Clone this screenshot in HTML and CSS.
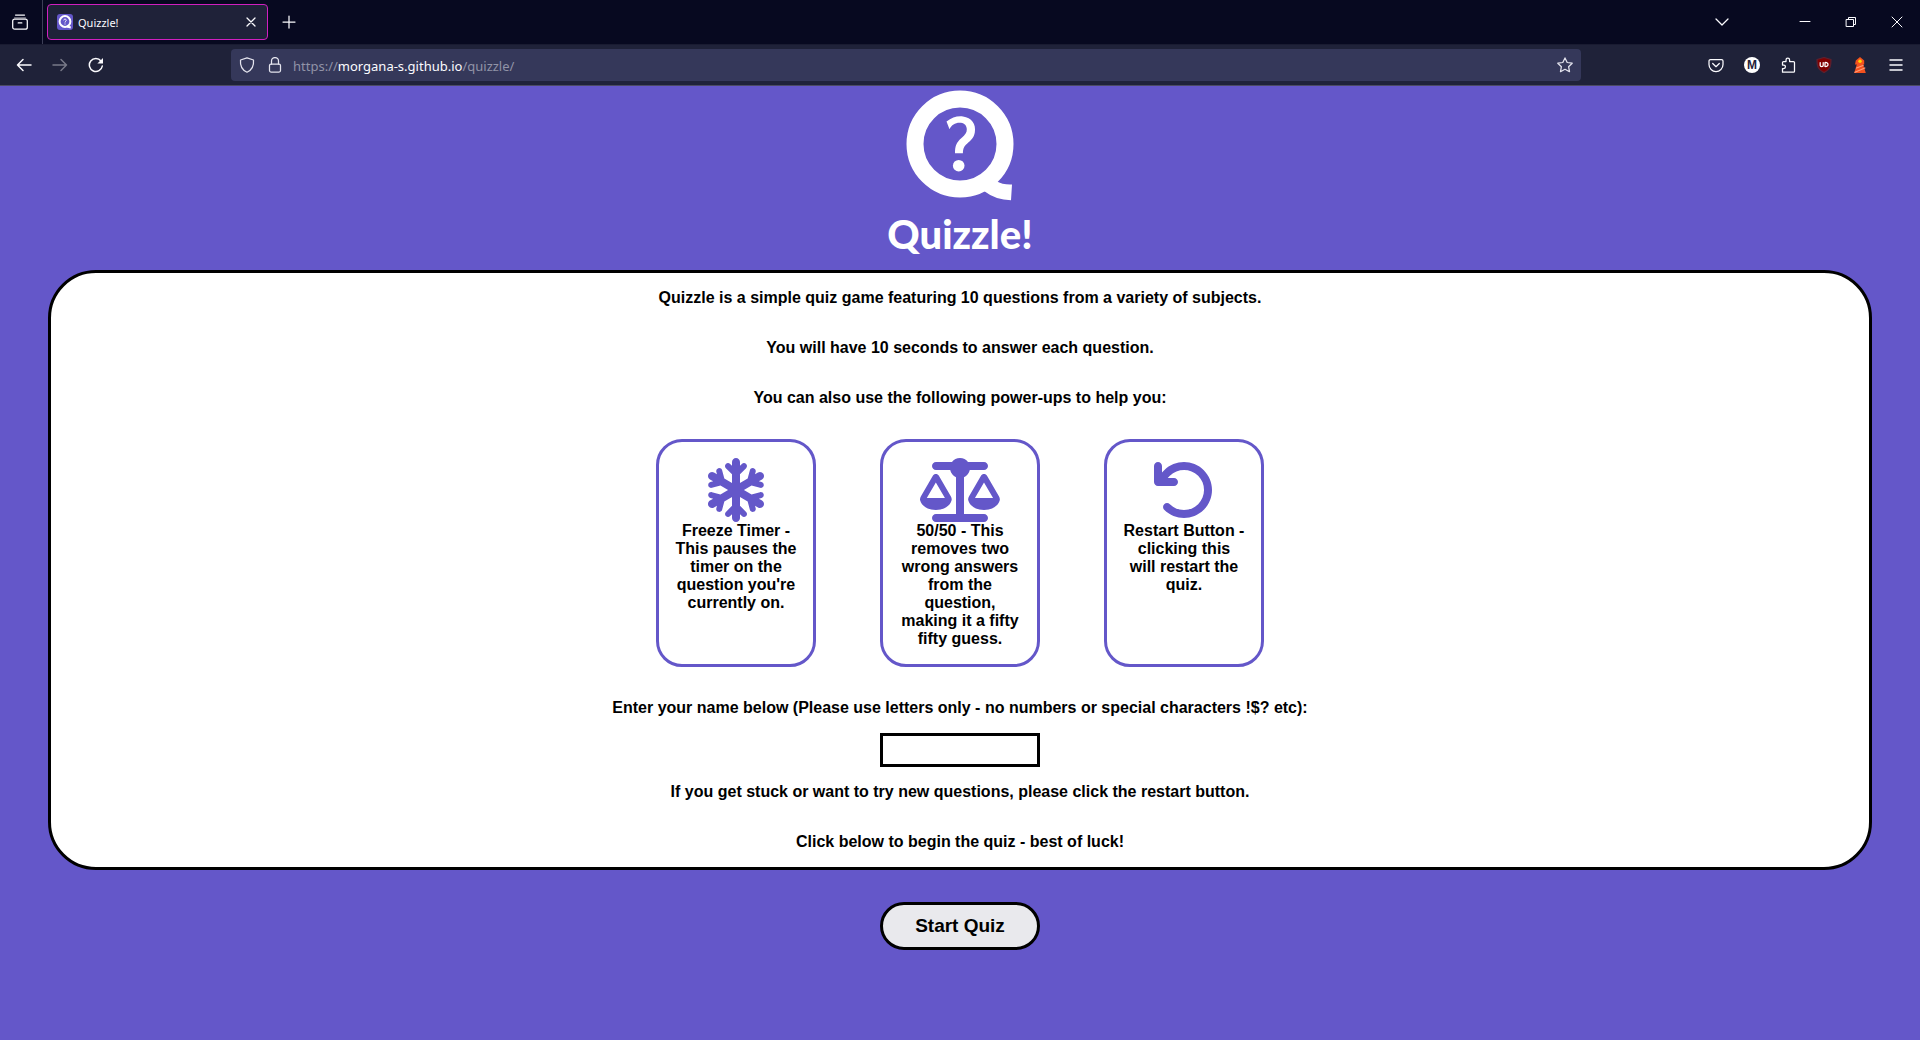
FILE: index.html
```html
<!DOCTYPE html>
<html lang="en">
<head>
<meta charset="utf-8">
<meta name="viewport" content="width=device-width, initial-scale=1">
<title>Quizzle!</title>
<link rel="stylesheet" href="styles.css">
</head>
<body>
<div class="browser">
  <div class="tab-bar">
    <button class="tool view-button" aria-label="Recent browsing"><svg class="icon" viewBox="0 0 16 16"><path d="M3.500 1h9"/><path d="M2.500 3.800h11" opacity=".5"/><rect x=".7" y="5" width="14.600" height="10.200" rx="2"/><path d="M6.200 8.900h3.600"/></svg></button>
    <div class="tab">
      <svg class="favicon" viewBox="0 0 16 16"><rect width="16" height="16" rx="3" fill="#6457c9"/><circle cx="8" cy="7.500" r="5.400" fill="none" stroke="#fff" stroke-width="2"/><path d="M10 12.500l3.800 1" stroke="#fff" stroke-width="2"/><path d="M6.700 6.300c.2-1.700 2.900-1.500 2.500.2-.2.900-1.200.9-1.200 2M8 9.500v1" fill="none" stroke="#fff"/></svg>
      <span class="tab-title">Quizzle!</span>
      <button class="tab-close" aria-label="Close tab"><svg class="icon" viewBox="0 0 16 16"><path d="M4 4l8 8M12 4l-8 8"/></svg></button>
    </div>
    <button class="tool" aria-label="New tab"><svg class="icon" viewBox="0 0 16 16"><path d="M8 2v12M2 8h12"/></svg></button>
    <div class="window-controls">
      <button class="tool list-tabs" aria-label="List all tabs"><svg class="icon" viewBox="0 0 16 16"><path d="M2 5l6 6 6-6"/></svg></button>
      <button class="window-button" aria-label="Minimize"><svg class="icon thin" viewBox="0 0 16 16"><path d="M3 7.500h10"/></svg></button>
      <button class="window-button" aria-label="Restore"><svg class="icon thin" viewBox="0 0 16 16"><path d="M3.500 5.500h7v7h-7zM5.500 5.500v-2h7v7h-2"/></svg></button>
      <button class="window-button" aria-label="Close window"><svg class="icon thin" viewBox="0 0 16 16"><path d="M3 3l10 10M13 3l-10 10"/></svg></button>
    </div>
  </div>
  <div class="nav-bar">
    <button class="tool" aria-label="Back"><svg class="icon bold" viewBox="0 0 16 16"><path d="M15 8H1.500M7 2.500L1.500 8 7 13.500"/></svg></button>
    <button class="tool" aria-label="Forward" disabled><svg class="icon bold" viewBox="0 0 16 16"><path d="M1 8h13.500M9 2.500L14.500 8 9 13.500"/></svg></button>
    <button class="tool" aria-label="Reload"><svg class="icon bold" viewBox="0 0 16 16"><path d="M13 4A6.500 6.500 0 1 0 14.300 9"/><path class="solid" d="M15 1v5.600H9.400z" stroke="none"/></svg></button>
    <div class="url-bar">
      <svg class="icon" viewBox="0 0 16 16"><path d="M8 .8L14.500 3c.5 5.500-1.500 10-6.500 12.200C3 13 1 8.500 1.500 3z"/></svg>
      <svg class="icon" viewBox="0 0 16 16"><rect x="2.500" y="7" width="11" height="8" rx="1.500"/><path d="M4.500 7V4a3.500 3.500 0 0 1 7 0v3"/></svg>
      <span class="url">https://<b>morgana-s.github.io</b>/quizzle/</span>
      <svg class="icon" viewBox="0 0 16 16"><path d="M8 .9l2.200 4.600 5 .7-3.600 3.500.9 5L8 12.300l-4.500 2.400.9-5L.8 6.200l5-.7z"/></svg>
    </div>
    <button class="tool" aria-label="Save to Pocket"><svg class="icon" viewBox="0 0 16 16"><path d="M2.500 2.500h11a1.500 1.500 0 0 1 1.500 1.500v3.500a7 7 0 0 1-14 0V4a1.500 1.500 0 0 1 1.500-1.500z"/><path d="M4.700 6.500L8 9.700l3.300-3.200"/></svg></button>
    <button class="tool" aria-label="Account"><span class="avatar">M</span></button>
    <button class="tool" aria-label="Extensions"><svg class="icon" viewBox="0 0 16 16"><path d="M2.500 15.200v-3.700h1.200a1.700 1.700 0 0 0 0-3.500H2.500V5.500a1 1 0 0 1 1-1H6V3a1.800 1.800 0 0 1 3.600 0v1.500h3.900a1 1 0 0 1 1 1v8.700a1 1 0 0 1-1 1z"/></svg></button>
    <button class="tool" aria-label="uBlock Origin"><svg class="icon" viewBox="0 0 16 16"><path d="M8 .5l7 2C15 9 14.500 12.500 8 15.600 1.500 12.500 1 9 1 2.500z" fill="#800000" stroke="#5b2130"/><path d="M4.200 5.500v3q0 1 1.500 1t1.500-1v-3M9 5.500v4q3 .2 3-2t-3-2" stroke="#fff"/></svg></button>
    <button class="tool" aria-label="Lighthouse"><svg class="icon" viewBox="0 0 16 16"><path d="M3.800 3.500L8 0l4.200 3.500v4H11.200L13.800 16H2.200L4.800 7.500H3z" fill="#f4511e" stroke="none"/><path d="M4.500 11l6.500-2.500M3 15.300l9.800-4.300" stroke="#ff9a78"/><circle cx="8" cy="4.200" r="1.700" fill="#ffd600" stroke="none"/></svg></button>
    <button class="tool" aria-label="Menu"><svg class="icon bold" viewBox="0 0 16 16"><path d="M2 3h12M2 8h12M2 13h12"/></svg></button>
  </div>
</div>

<header class="site-header">
  <svg class="logo" viewBox="0 0 108 112" role="img" aria-label="Quizzle logo"><circle cx="54" cy="54" r="45" fill="none" stroke="#fff" stroke-width="17"/><path d="M90 91q7 4 16 3.500l-1 15.700q-15 0-27-9.200z" fill="#fff"/><path d="M40.500 31.500C46 27.500 51 25.800 57 26.500c8.500 1 13.300 7.500 11.800 16-.8 5-4 8-7.500 11-3.300 2.800-4.300 5-4.400 9.800H49c0-7.500 1.500-11 6.500-15.300 3.800-3.300 5.500-5.500 5.300-9-.3-4.500-3.300-6.300-7.300-6.300-4.500 0-8 2.300-10 6.500z" fill="#fff"/><circle cx="52.700" cy="75.700" r="5.800" fill="#fff"/></svg>
  <h1 class="site-title">Quizzle!</h1>
</header>

<main>
  <section class="panel">
    <p>Quizzle is a simple quiz game featuring 10 questions from a variety of subjects.</p>
    <p>You will have 10 seconds to answer each question.</p>
    <p>You can also use the following power-ups to help you:</p>
    <div class="cards">
      <div class="card">
        <svg class="card-icon" viewBox="0 0 448 512"><path d="M224 0c17.700 0 32 14.300 32 32l0 30.100 15-15c9.400-9.400 24.600-9.400 33.900 0s9.400 24.600 0 33.900l-49 49 0 70.300 61.400-35.800 17.700-66.100c3.400-12.800 16.600-20.400 29.400-17s20.400 16.600 17 29.400l-5.200 19.300 23.600-13.800c15.300-8.900 34.900-3.700 43.800 11.500s3.800 34.900-11.500 43.800l-25.300 14.800 21.700 5.800c12.800 3.400 20.400 16.600 17 29.400s-16.600 20.400-29.400 17l-67.700-18.100L287.500 256l60.900 35.500 67.700-18.100c12.800-3.400 26 4.200 29.400 17s-4.200 26-17 29.400l-21.700 5.800 25.300 14.800c15.300 8.900 20.400 28.500 11.500 43.800s-28.500 20.400-43.800 11.500l-23.600-13.800 5.200 19.300c3.400 12.800-4.200 26-17 29.400s-26-4.200-29.400-17l-17.700-66.100L256 311.700l0 70.300 49 49c9.400 9.400 9.400 24.600 0 33.900s-24.600 9.400-33.900 0l-15-15 0 30.100c0 17.700-14.300 32-32 32s-32-14.300-32-32l0-30.100-15 15c-9.400 9.400-24.600 9.400-33.900 0s-9.400-24.600 0-33.900l49-49 0-70.300-61.400 35.800-17.700 66.100c-3.400 12.800-16.600 20.400-29.400 17s-20.400-16.600-17-29.400l5.200-19.300L48.100 395.600c-15.300 8.900-34.900 3.700-43.800-11.500s-3.700-34.900 11.500-43.800l25.300-14.800-21.700-5.800c-12.800-3.400-20.400-16.600-17-29.400s16.600-20.400 29.400-17l67.700 18.100L160.500 256 99.600 220.500 31.900 238.600c-12.800 3.400-26-4.200-29.400-17s4.200-26 17-29.400l21.700-5.800L15.900 171.600C.6 162.700-4.500 143.100 4.400 127.900s28.500-20.400 43.800-11.500l23.600 13.800-5.200-19.300c-3.400-12.800 4.200-26 17-29.400s26 4.200 29.400 17l17.700 66.100L192 200.300l0-70.300L143 81c-9.400-9.400-9.400-24.600 0-33.900s24.600-9.400 33.900 0l15 15L192 32c0-17.700 14.300-32 32-32z"/></svg>
        <div>Freeze Timer - This pauses the timer on the question you're currently on.</div>
      </div>
      <div class="card">
        <svg class="card-icon" viewBox="0 0 640 512"><path d="M384 32l128 0c17.700 0 32 14.300 32 32s-14.300 32-32 32L398.400 96c-5.200 25.800-22.900 47.100-46.400 57.300L352 448l160 0c17.700 0 32 14.300 32 32s-14.300 32-32 32l-192 0-192 0c-17.700 0-32-14.300-32-32s14.300-32 32-32l160 0 0-294.700c-23.500-10.300-41.200-31.600-46.400-57.300L128 96c-17.700 0-32-14.300-32-32s14.300-32 32-32l128 0c14.600-19.400 37.800-32 64-32s49.400 12.600 64 32zm55.600 288l144.900 0L512 195.800 439.600 320zM512 416c-62.900 0-115.200-34-126-78.900c-2.600-11 1-22.300 6.700-32.100l95.200-163.200c5-8.600 14.200-13.800 24.100-13.800s19.100 5.300 24.100 13.800l95.200 163.200c5.700 9.800 9.300 21.100 6.700 32.100C627.200 382 574.900 416 512 416zM126.800 195.800L54.400 320l144.900 0L126.800 195.800zM.9 337.100c-2.600-11 1-22.300 6.700-32.100l95.200-163.200c5-8.600 14.200-13.800 24.100-13.800s19.100 5.300 24.100 13.800l95.200 163.200c5.700 9.800 9.300 21.100 6.700 32.100C242 382 189.700 416 126.800 416S11.700 382 .9 337.100z"/></svg>
        <div>50/50 - This removes two wrong answers from the question, making it a fifty fifty guess.</div>
      </div>
      <div class="card">
        <svg class="card-icon" viewBox="0 0 512 512"><path d="M125.700 160l50.300 0c17.700 0 32 14.300 32 32s-14.300 32-32 32L48 224c-17.700 0-32-14.300-32-32L16 64c0-17.700 14.300-32 32-32s32 14.300 32 32l0 51.200L97.600 97.600c87.500-87.500 229.300-87.500 316.800 0s87.500 229.300 0 316.800s-229.300 87.500-316.800 0c-12.500-12.500-12.500-32.800 0-45.300s32.800-12.500 45.300 0c62.500 62.500 163.800 62.500 226.300 0s62.500-163.800 0-226.300s-163.800-62.500-226.300 0L125.700 160z"/></svg>
        <div>Restart Button - clicking this will restart the quiz.</div>
      </div>
    </div>
    <div class="name-field">
      <label for="player-name">Enter your name below (Please use letters only - no numbers or special characters !$? etc):</label>
      <input class="name-input" id="player-name" type="text">
      <p>If you get stuck or want to try new questions, please click the restart button.</p>
    </div>
    <p>Click below to begin the quiz - best of luck!</p>
  </section>
  <button class="start-button" type="button">Start Quiz</button>
</main>
</body>
</html>
```
FILE: styles.css
```css
* {
  box-sizing: border-box;
}

body {
  margin: 0;
  background: #6457c9;
  color: #000;
  font: bold 16px/18px "Liberation Sans", Arial, sans-serif;
  text-align: center;
}

p {
  margin: 0;
}

button {
  font: inherit;
  padding: 0;
  border: 0;
  background: none;
  color: inherit;
}

/* Browser window */
.browser {
  color: #fbfbfe;
  font: 11px/16px "Noto Sans", "Open Sans", sans-serif;
  text-align: left;
}

.tab-bar {
  display: flex;
  align-items: center;
  height: 44px;
  background: #070920;
}

.nav-bar {
  display: flex;
  align-items: center;
  height: 42px;
  padding: 0 6px;
  background: #1f2239;
  border-top: 1px solid #191b31;
  border-bottom: 1px solid #4b4b63;
}

.icon {
  flex: none;
  width: 16px;
  height: 16px;
  fill: none;
  stroke: currentColor;
  stroke-width: 1.25;
  stroke-linecap: round;
  stroke-linejoin: round;
}

.bold {
  stroke-width: 1.5;
}

.thin {
  stroke-width: 1;
}

.solid {
  fill: currentColor;
}

.tool {
  display: flex;
  flex: none;
  align-items: center;
  justify-content: center;
  width: 36px;
  height: 32px;
}

.tool:disabled {
  opacity: 0.4;
}

.view-button {
  width: 43px;
  height: 44px;
  padding-right: 2px;
  border-right: 1px solid #3d3f57;
}

.tab {
  display: flex;
  align-items: center;
  gap: 5px;
  width: 221px;
  height: 36px;
  margin: 0 3px 0 4px;
  padding: 0 8px 0 9px;
  border: 1px solid #d11fc0;
  border-radius: 4px;
  background: #1f2239;
}

.favicon {
  width: 16px;
  height: 16px;
}

.tab-title {
  flex: 1;
  padding-top: 2px;
}

.tab-close {
  display: flex;
}

.window-controls {
  display: flex;
  align-items: center;
  margin-left: auto;
}

.list-tabs {
  margin-right: 42px;
}

.window-button {
  display: flex;
  align-items: center;
  justify-content: center;
  width: 46px;
  height: 44px;
}

.url-bar {
  display: flex;
  flex: 1;
  align-items: center;
  gap: 12px;
  height: 32px;
  margin: 0 117px;
  padding: 0 8px;
  border-radius: 4px;
  background: #35385a;
  color: #e4e4ee;
}

.url {
  flex: 1;
  margin-left: -2px;
  padding-top: 2px;
  color: #9193a7;
  font-size: 13px;
}

.url b {
  color: #fbfbfe;
  font-weight: 400;
}

.avatar {
  width: 16px;
  height: 16px;
  border-radius: 50%;
  background: #fff;
  color: #1f2239;
  font: bold 12px/16px "Liberation Sans", sans-serif;
  text-align: center;
}

/* Page header */
.site-header {
  display: flex;
  flex-direction: column;
  align-items: center;
  padding-top: 4px;
}

.logo {
  width: 108px;
  height: 112px;
}

.site-title {
  margin: 4px 0 8px;
  color: #fff;
  font: 900 40px/56px Lato, "Liberation Sans", sans-serif;
}

/* Instructions */
main {
  display: flex;
  flex-direction: column;
  align-items: center;
  gap: 32px;
  padding-bottom: 32px;
}

.panel {
  display: flex;
  flex-direction: column;
  align-items: center;
  gap: 32px;
  width: 95%;
  padding: 16px;
  border: 3px solid #000;
  border-radius: 48px;
  background: #fff;
}

.cards {
  display: flex;
  flex-wrap: wrap;
  justify-content: center;
  gap: 64px;
}

.card {
  width: 160px;
  padding: 16px;
  border: 3px solid #6457c9;
  border-radius: 26px;
}

.card-icon {
  display: block;
  height: 64px;
  margin: 0 auto;
  fill: #6457c9;
}

.name-field {
  display: flex;
  flex-direction: column;
  align-items: center;
  gap: 16px;
}

.name-input {
  width: 160px;
  height: 34px;
  padding: 4px 8px;
  border: 3px solid #000;
  background: #fff;
  font: inherit;
}

.start-button {
  width: 160px;
  height: 48px;
  border: 3px solid #000;
  border-radius: 24px;
  background: #e9e9ed;
  color: #000;
  font-size: 19px;
}
```
